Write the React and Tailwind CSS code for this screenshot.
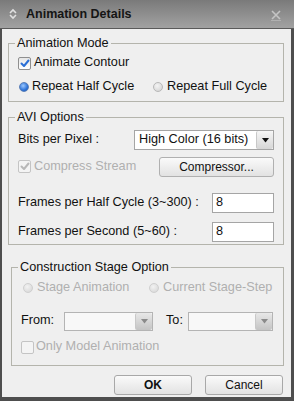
import React from "react";

function Check({ checked, disabled }) {
  return (
    <span
      className={
        "w-[13px] h-[13px] shrink-0 flex items-center justify-center border rounded-[2px] " +
        (disabled ? "border-[#c4c4c4] bg-[#f4f4f4]" : "border-[#8f8f8f] bg-gradient-to-b from-[#e6e6e6] to-[#ffffff]")
      }
    >
      {checked && (
        <svg width="10" height="9" viewBox="0 0 10 9">
          <path
            d="M1.5 4.5 L4 7 L8.5 1.5"
            fill="none"
            stroke={disabled ? "#b8b8b8" : "#2a6fd6"}
            strokeWidth="2"
            strokeLinecap="round"
            strokeLinejoin="round"
          />
        </svg>
      )}
    </span>
  );
}

function Radio({ on, disabled }) {
  if (on) {
    return (
      <span className="w-[10px] h-[10px] shrink-0 rounded-full border border-[#5a7fb8] bg-[radial-gradient(circle_at_40%_35%,#9cc8ff,#2f74d8_60%,#1a55b0)]" />
    );
  }
  return (
    <span
      className={
        "w-[10px] h-[10px] shrink-0 rounded-full border " +
        (disabled
          ? "border-[#cfcfcf] bg-[radial-gradient(circle_at_40%_35%,#f2f2f2,#d4d4d4)]"
          : "border-[#b8b8b8] bg-[radial-gradient(circle_at_40%_35%,#f4f4f4,#cfcfcf)]")
      }
    />
  );
}

function Arrow({ disabled }) {
  return (
    <span
      className={
        "w-[17px] self-stretch flex items-center justify-center border-l border-[#c8c8c8] rounded-[2px] " +
        (disabled ? "bg-gradient-to-b from-[#e8e8e8] to-[#c4c4c4]" : "bg-gradient-to-b from-[#f6f6f6] to-[#d6d6d6]")
      }
    >
      <svg width="7" height="5" viewBox="0 0 7 5">
        <path d="M0 0 H7 L3.5 4.5 Z" fill={disabled ? "#8a8a8a" : "#111"} />
      </svg>
    </span>
  );
}

function Group({ title, className, children }) {
  return (
    <fieldset className={"border border-[#b4b4ac] px-[9px] " + className}>
      <legend className="px-[2px] ml-[-3px] h-[16px] leading-[16px] text-[#111]">{title}</legend>
      {children}
    </fieldset>
  );
}

export default function App() {
  return (
    <div
      className="w-[294px] h-[401px] flex flex-col bg-[#4e4e4e] text-[12.7px] text-[#111] whitespace-nowrap"
      style={{ fontFamily: '"Liberation Sans", Arial, sans-serif' }}
    >
      {/* title bar */}
      <div className="h-[29px] flex items-center bg-gradient-to-b from-[#7a7a7a] via-[#8e8e8e] to-[#a2a2a2] border-b border-[#5a5a5a]">
        <svg width="10" height="12" viewBox="0 0 10 12" className="ml-[8px] mr-[8px]">
          <path d="M2 5 L5 2 L8 5" fill="none" stroke="#e0e0e0" strokeWidth="1.6" />
          <path d="M2 7 L5 10 L8 7" fill="none" stroke="#e0e0e0" strokeWidth="1.6" />
        </svg>
        <span className="font-bold text-[12.5px] text-[#151515]">Animation Details</span>
        <svg width="12" height="12" viewBox="0 0 12 12" className="ml-auto mr-[12px] mt-[1px]">
          <path d="M2 2 L10 10 M10 2 L2 10" stroke="#c4c4c4" strokeWidth="1.6" />
          <path d="M1 11.5 H11" stroke="#b0b0b0" strokeWidth="1" />
        </svg>
      </div>

      {/* body */}
      <div className="flex-1 flex flex-col ml-[2px] mr-[3px] mb-[4px] bg-[#efefef] pl-[6px] pr-[7px]">
        <Group title="Animation Mode" className="mt-[6px] pb-[4px]">
          <div className="h-[20px] mt-[2px] flex items-center gap-[3px]">
            <Check checked />
            <span>Animate Contour</span>
          </div>
          <div className="h-[20px] mt-[4px] flex items-center pl-[1px]">
            <div className="flex items-center gap-[3px] w-[134px]">
              <Radio on />
              <span>Repeat Half Cycle</span>
            </div>
            <div className="flex items-center gap-[4px]">
              <Radio />
              <span>Repeat Full Cycle</span>
            </div>
          </div>
        </Group>

        <Group title="AVI Options" className="mt-[7px] pb-[2px]">
          <div className="h-[20px] mt-[5px] flex items-center">
            <span>Bits per Pixel :</span>
            <div className="ml-auto w-[140px] h-[20px] flex items-center bg-white border border-[#a5a5a5]">
              <span className="flex-1 pl-[4px]">High Color (16 bits)</span>
              <Arrow />
            </div>
          </div>
          <div className="h-[20px] mt-[7px] flex items-center">
            <div className="flex items-center gap-[3px] text-[#b0b0b0]">
              <Check checked disabled />
              <span>Compress Stream</span>
            </div>
            <button className="ml-auto w-[115px] h-[20px] text-[12px] border border-[#b0b0b0] rounded-[3px] bg-gradient-to-b from-[#fafafa] to-[#e2e2e2]">
              Compressor...
            </button>
          </div>
          <div className="h-[20px] mt-[16px] flex items-center">
            <span>Frames per Half Cycle (3~300) :</span>
            <div className="ml-auto w-[62px] h-[20px] bg-white border border-[#a5a5a5] pl-[3px] leading-[17px]">8</div>
          </div>
          <div className="h-[20px] mt-[9px] flex items-center">
            <span>Frames per Second (5~60) :</span>
            <div className="ml-auto w-[62px] h-[20px] bg-white border border-[#a5a5a5] pl-[3px] leading-[17px]">8</div>
          </div>
        </Group>

        <Group title="Construction Stage Option" className="mt-[14px] pb-[8px] ml-[3px]">
          <div className="h-[20px] mt-[3px] flex items-center pl-[2px] text-[#b0b0b0]">
            <div className="flex items-center gap-[4px] w-[126px]">
              <Radio disabled />
              <span>Stage Animation</span>
            </div>
            <div className="flex items-center gap-[4px]">
              <Radio disabled />
              <span>Current Stage-Step</span>
            </div>
          </div>
          <div className="h-[20px] mt-[13px] flex items-center">
            <span className="w-[43px]">From:</span>
            <div className="w-[89px] h-[19px] flex bg-[#f8f8f8] border border-[#b4b4b4]">
              <span className="flex-1" />
              <Arrow disabled />
            </div>
            <span className="ml-[13px] w-[22px]">To:</span>
            <div className="w-[85px] h-[19px] flex bg-[#f8f8f8] border border-[#b4b4b4]">
              <span className="flex-1" />
              <Arrow disabled />
            </div>
          </div>
          <div className="h-[20px] mt-[6px] flex items-center gap-[2px] text-[#b0b0b0]">
            <Check disabled />
            <span>Only Model Animation</span>
          </div>
        </Group>

        <div className="flex justify-end gap-[13px] mt-[9px] pr-[1px]">
          <button className="w-[78px] h-[20px] font-bold text-[12px] border border-[#a8a8a8] rounded-[3px] bg-gradient-to-b from-[#fafafa] to-[#e2e2e2]">
            OK
          </button>
          <button className="w-[78px] h-[20px] text-[12px] border border-[#a8a8a8] rounded-[3px] bg-gradient-to-b from-[#fafafa] to-[#e2e2e2]">
            Cancel
          </button>
        </div>
      </div>
    </div>
  );
}
